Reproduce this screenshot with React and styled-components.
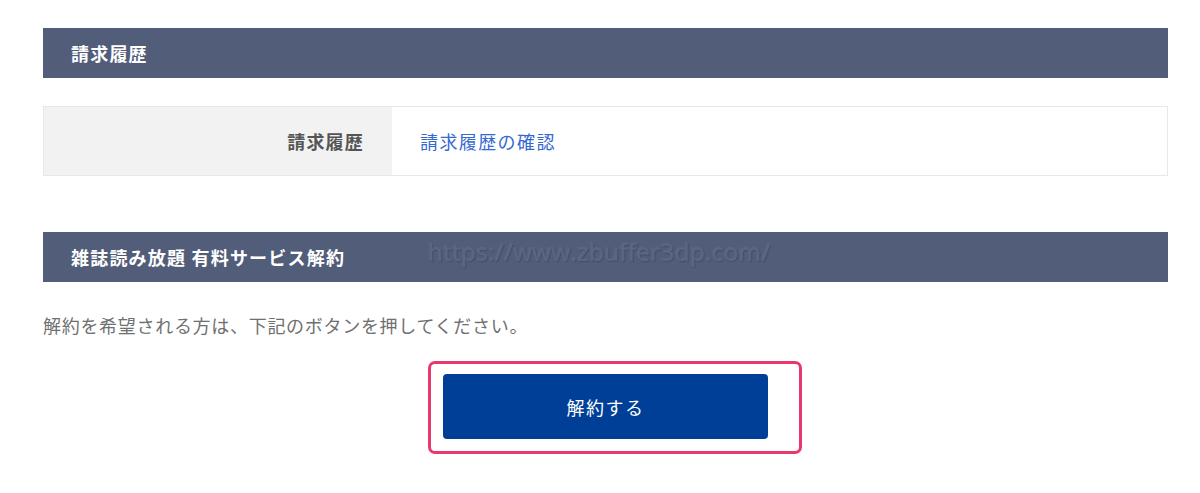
import styled, { createGlobalStyle } from 'styled-components';

const GlobalStyle = createGlobalStyle`
  body {
    margin: 0;
    background: #ffffff;
    font-family: "Noto Sans CJK JP", "Noto Sans", sans-serif;
  }
`;

const Page = styled.div`
  padding: 28px 32px 40px 43px;
`;

const SectionHeader = styled.h2`
  position: relative;
  margin: 0;
  height: 50px;
  display: flex;
  align-items: center;
  padding-left: 28px;
  background: #525d79;
  color: #ffffff;
  font-size: 18px;
  font-weight: 700;
  letter-spacing: 1.2px;
`;

const Watermark = styled.span`
  position: absolute;
  left: 385px;
  top: 3px;
  font-family: "Open Sans", "DejaVu Sans", sans-serif;
  font-size: 24.5px;
  font-weight: 400;
  letter-spacing: 0.2px;
  color: #5b6683;
  text-shadow: 1px 1px 1px rgba(40, 48, 70, 0.35), -1px -1px 0 rgba(120, 130, 160, 0.25);
  pointer-events: none;
`;

const InfoTable = styled.div`
  display: grid;
  grid-template-columns: 348px 1fr;
  margin: 28px 0 56px;
  border: 1px solid #e8e8e8;
  height: 68px;
`;

const LabelCell = styled.div`
  display: flex;
  align-items: center;
  justify-content: flex-end;
  padding-right: 28px;
  background: #f2f2f2;
  color: #555555;
  font-size: 18px;
  font-weight: 700;
  letter-spacing: 1.2px;
`;

const ValueCell = styled.div`
  display: flex;
  align-items: center;
  padding-left: 28px;
  background: #ffffff;
`;

const Link = styled.a`
  color: #3669cf;
  font-size: 18px;
  letter-spacing: 1.4px;
  text-decoration: none;
  cursor: pointer;
`;

const Note = styled.p`
  margin: 30px 0 0;
  line-height: 27px;
  color: #707070;
  font-size: 18px;
  letter-spacing: 0.7px;
`;

const ButtonRow = styled.div`
  display: flex;
  justify-content: center;
  margin-top: 35px;
`;

const Highlight = styled.div`
  position: relative;

  &::before {
    content: '';
    position: absolute;
    top: -13px;
    bottom: -15px;
    left: -15px;
    right: -34px;
    border: 3px solid #e9386e;
    border-radius: 7px;
    pointer-events: none;
  }
`;

const CancelButton = styled.button`
  width: 325px;
  height: 65px;
  border: none;
  border-radius: 4px;
  background: #003f98;
  color: #ffffff;
  font-family: "Noto Sans CJK JP", "Noto Sans", sans-serif;
  font-size: 18px;
  letter-spacing: 1.5px;
  cursor: pointer;
`;

export default function App() {
  return (
    <>
      <GlobalStyle />
      <Page>
        <SectionHeader>請求履歴</SectionHeader>
        <InfoTable>
          <LabelCell>請求履歴</LabelCell>
          <ValueCell>
            <Link>請求履歴の確認</Link>
          </ValueCell>
        </InfoTable>

        <SectionHeader>
          雑誌読み放題 有料サービス解約
          <Watermark>https://www.zbuffer3dp.com/</Watermark>
        </SectionHeader>
        <Note>解約を希望される方は、下記のボタンを押してください。</Note>
        <ButtonRow>
          <Highlight>
            <CancelButton>解約する</CancelButton>
          </Highlight>
        </ButtonRow>
      </Page>
    </>
  );
}
